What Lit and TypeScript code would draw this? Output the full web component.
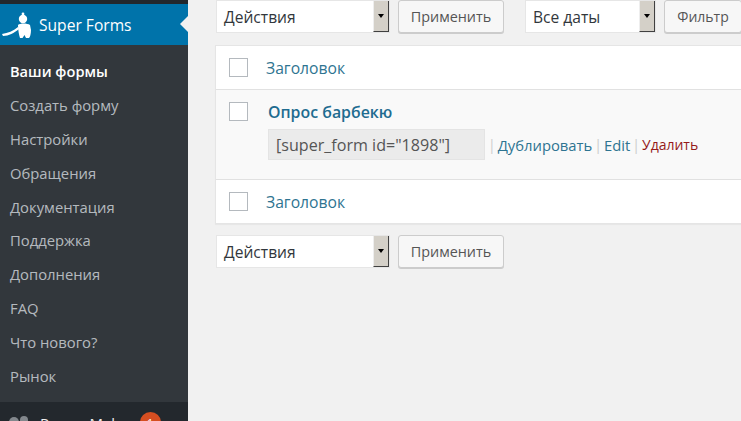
import { LitElement, html, css } from "lit";
import { customElement } from "lit/decorators.js";

const MENU = ["Создать форму","Настройки","Обращения","Документация","Поддержка","Дополнения","FAQ","Что нового?","Рынок"];

@customElement("app-root")
export class AppRoot extends LitElement {
  static styles = css`
    :host { display: flex; width: 741px; height: 421px; overflow: hidden; background: #f1f1f1; font-family: "Open Sans", "Noto Sans", sans-serif; font-size: 15px; color: #444; }
    * { box-sizing: border-box; }
    .side { width: 188px; flex: none; background: #32373c; display: flex; flex-direction: column; overflow: hidden; }
    .topstrip { height: 4px; flex: none; background: #23282d; }
    .cur { height: 41px; flex: none; background: #0073aa; color: #fff; display: flex; align-items: center; gap: 6px; position: relative; font-size: 15.6px; }
    .cur::after { content: ""; position: absolute; right: 0; top: 12px; border: 8px solid transparent; border-right-color: #f1f1f1; border-left: 0; }
    .sub { padding-top: 10px; height: 357px; flex: none; display: flex; flex-direction: column; }
    .sub div { height: 33.9px; flex: none; line-height: 33.9px; padding-left: 10px; color: rgba(240,245,250,.7); font-size: 14.8px; white-space: nowrap; }
    .sub div.on { color: #fff; font-weight: 600; font-size: 14.6px; }
    .next { flex: none; height: 40px; background: #23282d; display: flex; padding: 10px 0 0 9px; color: #eee; white-space: nowrap; align-items: flex-start; }
    .next svg { flex: none; margin: 3px 3px 0 0; }
    .next .t { line-height: 21px; margin: 1px 0 0 8px; font-size: 15px; }
    .badge { width: 21px; height: 21px; border-radius: 50%; background: #d54e21; color: #fff; font-size: 11px; text-align: center; line-height: 21px; margin-left: 6px; flex: none; }
    .main { flex: 1; min-width: 0; padding: 0 0 0 27px; display: flex; flex-direction: column; overflow: hidden; }
    .bar { display: flex; align-items: stretch; height: 33px; flex: none; padding-left: 1px; }
    .sel { display: flex; flex: none; background: #fff; border: 1px solid #e6e6e6; color: #32373c; font-size: 15.6px; align-items: center; padding-left: 7px; position: relative; }
    .sel .arr { position: absolute; right: 0; top: 0; bottom: 0; width: 16px; background: #d4d0c8; border-right: 1px solid #404040; border-bottom: 1px solid #404040; border-left: 1px solid #eee; display: flex; align-items: center; justify-content: center; }
    .sel .arr::after { content: ""; border: 3.5px solid transparent; border-top: 4px solid #000; border-bottom: 0; }
    .s1 { width: 174px; }
    .s2 { width: 131px; margin-left: 21px; }
    .btn { background: #f7f7f7; border: 1px solid #ccc; border-radius: 3px; box-shadow: 0 1px 0 #ccc; color: #555; display: flex; align-items: center; justify-content: center; font-size: 14.4px; height: 33px; margin-left: 8px; flex: none; }
    .b1 { width: 106px; }
    .b2 { width: 78px; font-size: 14px; }
    .table { margin-top: 12px; width: 560px; background: #fff; border: 1px solid #e5e5e5; box-shadow: 0 1px 1px rgba(0,0,0,.04); flex: none; }
    .row { display: flex; align-items: center; height: 43px; padding-left: 13px; }
    .cb { width: 19px; height: 19px; border: 1px solid #b4b9be; background: #fff; flex: none; }
    .h { color: #2e7491; margin-left: 18px; font-size: 15.7px; }
    .item { background: #f9f9f9; border-top: 1px solid #e1e1e1; border-bottom: 1px solid #e1e1e1; height: 91px; padding: 12px 0 0 13px; display: flex; }
    .body { margin-left: 20px; }
    .title { color: #1f6c90; font-weight: 600; font-size: 15.9px; line-height: 20px; }
    .line { display: flex; align-items: center; margin-top: 7px; height: 31px; white-space: nowrap; }
    .code { width: 217px; height: 31px; flex: none; background: #ebebeb; border: 1px solid #e4e4e4; color: #555; display: flex; align-items: center; padding-left: 7px; font-size: 16.1px; }
    .sep { color: #ccc; margin: 0 2px; font-size: 14px; }
    .sep.a { margin-left: 3px; }
    .lk { color: #2e7491; font-size: 14.8px; }
    .del { color: #951a1a; font-size: 14px; }
    .bottom { margin-top: 11px; height: 33px; }
    .logo { flex: none; }
  `;

  render() {
    return html`
      <div class="side">
        <div class="topstrip"></div>
        <div class="cur">
          <svg class="logo" width="33" height="41" viewBox="0 0 33 41">
            <path d="M2 30 C8 29 13 27 18 23 L19 25 C14 29 9 32 3 32 Z" fill="#fff"/>
            <circle cx="23" cy="15" r="4.2" fill="#fff"/>
            <circle cx="23" cy="10" r="1.4" fill="#fff"/>
            <path d="M18 21 C20 19 27 19 30 21 L31 26 C31 30 30 33 29 34 L26 34 L24.5 31 L22.5 34 L20 34 C19 31 18 26 18 21 Z" fill="#fff"/>
          </svg>
          <span>Super Forms</span>
        </div>
        <div class="sub">
          <div class="on">Ваши формы</div>
          ${MENU.map((m) => html`<div>${m}</div>`)}
        </div>
        <div class="next">
          <svg width="20" height="20" viewBox="0 0 20 20"><circle cx="5" cy="7" r="5" fill="#82878c"/><circle cx="15" cy="5" r="4" fill="#82878c"/></svg>
          <span class="t">Popup Maker</span>
          <span class="badge">1</span>
        </div>
      </div>
      <div class="main">
        <div class="bar">
          <div class="sel s1">Действия<span class="arr"></span></div>
          <div class="btn b1">Применить</div>
          <div class="sel s2">Все даты<span class="arr"></span></div>
          <div class="btn b2">Фильтр</div>
        </div>
        <div class="table">
          <div class="row"><span class="cb"></span><span class="h">Заголовок</span></div>
          <div class="item">
            <span class="cb"></span>
            <div class="body">
              <div class="title">Опрос барбекю</div>
              <div class="line">
                <div class="code">[super_form id="1898"]</div>
                <span class="sep a">|</span><span class="lk">Дублировать</span>
                <span class="sep">|</span><span class="lk">Edit</span>
                <span class="sep">|</span><span class="del">Удалить</span>
              </div>
            </div>
          </div>
          <div class="row"><span class="cb"></span><span class="h">Заголовок</span></div>
        </div>
        <div class="bar bottom">
          <div class="sel s1">Действия<span class="arr"></span></div>
          <div class="btn b1">Применить</div>
        </div>
      </div>
    `;
  }
}
